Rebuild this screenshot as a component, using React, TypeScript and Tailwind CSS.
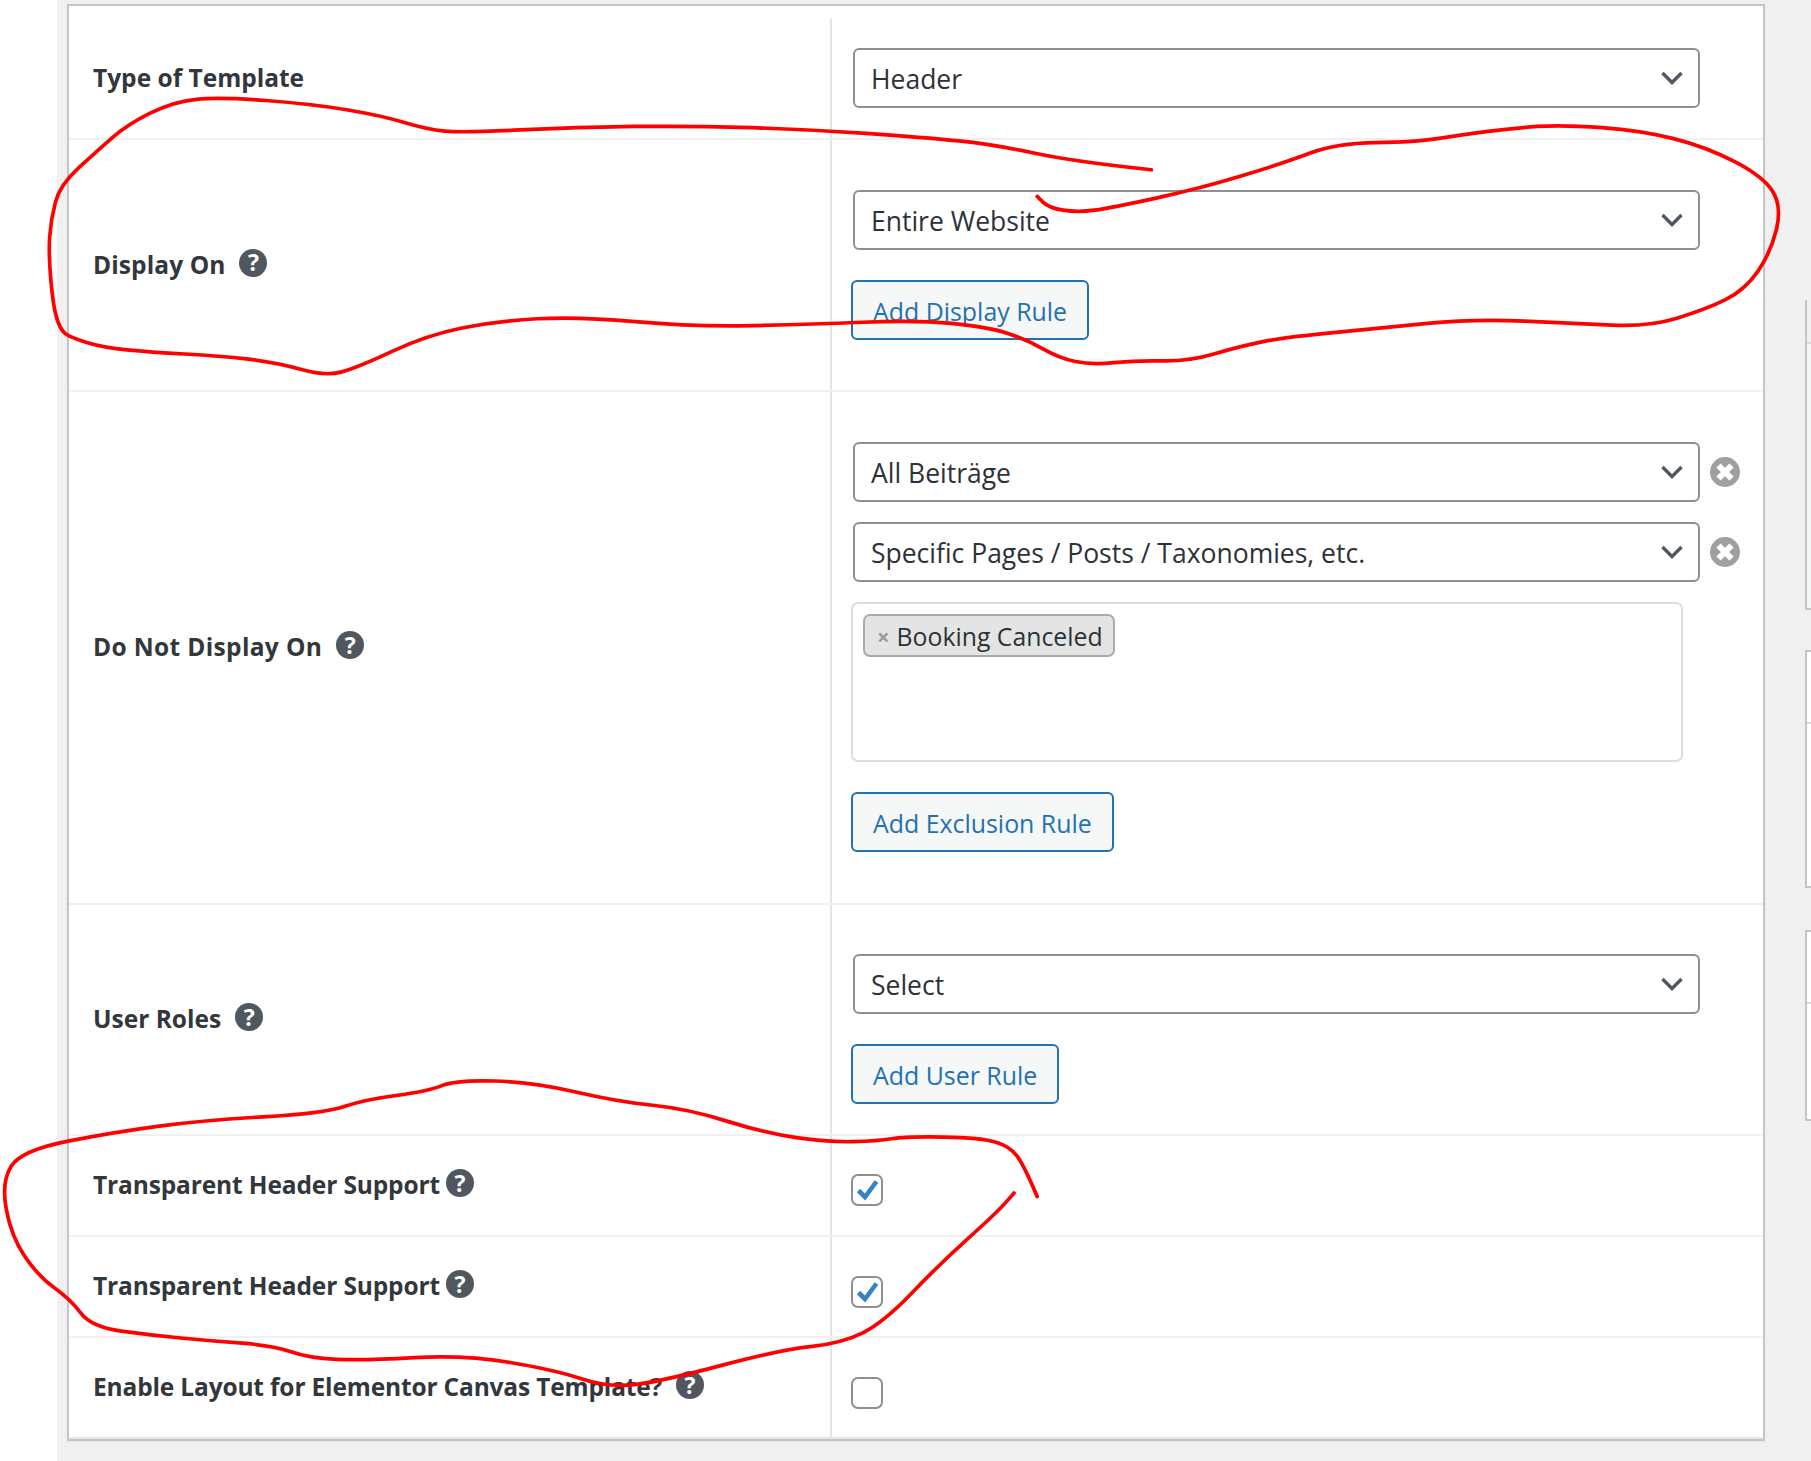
const font = "font-['Open_Sans',sans-serif]";

// freehand annotation, points are in the coordinates of the 1568 wide picture
const strokeOne: [number, number][] = [
  [997, 147], [930, 140], [860, 125], [800, 119], [700, 112], [600, 109], [500, 110], [400, 115], [370, 112],
  [330, 100], [270, 90], [190, 84], [150, 88], [110, 108], [85, 130], [52, 160], [44, 190], [42, 220], [46, 265],
  [52, 285], [60, 292], [90, 301], [130, 305], [190, 308], [240, 314], [282, 326], [310, 318], [370, 290],
  [430, 278], [500, 274], [600, 283], [700, 281], [793, 277], [855, 283], [889, 294], [917, 310], [945, 316],
  [984, 312], [1029, 313], [1073, 300], [1112, 292], [1197, 284], [1275, 276], [1365, 280], [1427, 283],
  [1477, 268], [1511, 251], [1533, 219], [1543, 179], [1527, 153], [1477, 127], [1421, 113], [1353, 108],
  [1309, 111], [1264, 117], [1225, 123], [1157, 124], [1112, 141], [1040, 163], [962, 180], [933, 184],
  [908, 180], [898, 170],
];
const strokeTwo: [number, number][] = [
  [898, 1036], [887, 1010], [875, 993], [850, 985], [784, 984], [760, 988], [717, 989], [662, 981], [595, 960],
  [535, 954], [462, 937], [395, 935], [370, 945], [316, 952], [280, 964], [176, 970], [100, 980], [18, 996],
  [1, 1024], [10, 1071], [33, 1105], [61, 1125], [79, 1149], [131, 1156], [182, 1161], [237, 1165], [267, 1176],
  [316, 1178], [401, 1173], [480, 1186], [528, 1202], [577, 1195], [674, 1169], [729, 1163], [765, 1145],
  [814, 1094], [863, 1050], [878, 1033],
];

function smoothPath(points: [number, number][]) {
  let d = `M${points[0][0]} ${points[0][1]}`;
  for (let i = 1; i < points.length - 1; i++) {
    const midX = (points[i][0] + points[i + 1][0]) / 2;
    const midY = (points[i][1] + points[i + 1][1]) / 2;
    d += ` Q${points[i][0]} ${points[i][1]} ${midX} ${midY}`;
  }
  const last = points[points.length - 1];
  return `${d} L${last[0]} ${last[1]}`;
}

function Help({ className = 'ml-[14px]' }: { className?: string }) {
  return (
    <span className={`-mt-[5px] flex h-[28px] w-[28px] shrink-0 items-center justify-center rounded-full bg-[#50575e] text-[23px] font-bold leading-none text-white ${className}`}>
      ?
    </span>
  );
}

function SelectBox({ value, onRemove }: { value: string; onRemove?: boolean }) {
  return (
    <div className="flex items-center">
      <div className="relative ml-[2px] w-[847px]">
        <select
          defaultValue={value}
          className="block h-[60px] w-full appearance-none rounded-[6px] border-2 border-[#8c8f94] bg-white pl-[16px] pt-[4px] text-[26.5px] text-[#2c3338] outline-none"
        >
          <option>{value}</option>
        </select>
        <svg className="absolute right-[15px] top-[17px]" width="26" height="26" viewBox="0 0 26 26" fill="none" stroke="#50575e" strokeWidth="3.4">
          <path d="M3.500 8l9.500 9.500L22.500 8" />
        </svg>
      </div>
      {onRemove && (
        <svg className="ml-[10px]" width="30" height="30" viewBox="0 0 30 30">
          <circle cx="15" cy="15" r="15" fill="#a0a0a0" />
          <path d="M8.500 8.500l13 13M21.500 8.500l-13 13" stroke="#fff" strokeWidth="6" />
        </svg>
      )}
    </div>
  );
}

function RuleButton({ children, className = '' }: { children: string; className?: string }) {
  return (
    <button className={`block h-[60px] rounded-[6px] border-2 border-[#2271b1] bg-[#f6f7f7] px-[20px] pt-[3px] text-[24.9px] text-[#2271b1] ${className}`}>
      {children}
    </button>
  );
}

function CheckBox({ checked }: { checked?: boolean }) {
  return (
    <span className="flex h-[32px] w-[32px] items-center justify-center rounded-[7px] border-2 border-[#8c8f94] bg-white">
      {checked && (
        <svg width="26" height="26" viewBox="0 0 26 26" fill="none" stroke="#3582c4" strokeWidth="4.600">
          <path d="M4.500 13.500l6.500 6.500L22.500 4.500" />
        </svg>
      )}
    </span>
  );
}

function Row({ label, labelClass = '', help, height, children, first, last, boxTop }: {
  label: string;
  labelClass?: string;
  help?: string;
  height: string;
  children: React.ReactNode;
  first?: boolean;
  last?: boolean;
  boxTop?: string;
}) {
  return (
    <div className={`flex ${height} border-b-2 ${last ? 'border-b-[#e6e6e8]' : 'border-b-[#f0f0f0]'}`}>
      <div className={`flex w-[761px] items-center pl-[24px] text-[24.500px] font-bold text-[#32373c] ${first ? 'pt-[12px]' : ''}`}>
        <span className={labelClass}>{label}</span>
        {help !== undefined && <Help className={help} />}
      </div>
      <div className={`flex-1 border-l-2 border-l-[#e4e4e4] pl-[19px] ${first ? 'mt-[12px]' : ''} ${boxTop ?? ''}`}>
        {children}
      </div>
    </div>
  );
}

export default function App() {
  return (
    <div className={`relative flex h-[1461px] overflow-hidden bg-white ${font}`}>
      <div className="w-[57px] shrink-0" />
      <div className="flex flex-1 bg-[#f0f0f1] pl-[10px] pt-[4px]">
        <div className="h-[1437px] w-[1698px] shrink-0 border-2 border-[#c3c4c7] bg-white shadow-[0_1px_1px_rgba(0,0,0,0.04)]">
          <Row label="Type of Template" height="h-[134px]" first boxTop="pt-[30px]">
            <SelectBox value="Header" />
          </Row>
          <Row label="Display On" labelClass="tracking-[0.1px]" help="ml-[14px]" height="h-[252px]" boxTop="pt-[50px]">
            <SelectBox value="Entire Website" />
            <RuleButton className="mt-[30px]">Add Display Rule</RuleButton>
          </Row>
          <Row label="Do Not Display On" labelClass="tracking-[0.35px]" help="ml-[14px]" height="h-[513px]" boxTop="pt-[50px]">
            <div className="flex flex-col gap-[20px]">
              <SelectBox value="All Beiträge" onRemove />
              <SelectBox value="Specific Pages / Posts / Taxonomies, etc." onRemove />
            </div>
            <div className="mt-[20px] h-[160px] w-[832px] rounded-[7px] border-2 border-[#dddddd] pl-[10px] pt-[10px]">
              <span className="inline-flex h-[43px] items-center rounded-[7px] border-2 border-[#aaaaaa] bg-[#e4e4e4] pl-[12px] pr-[10px] pt-[2px] text-[24.800px] text-[#2c3338]">
                <span className="mr-[7px] text-[22px] font-bold text-[#999999]">×</span>
                Booking Canceled
              </span>
            </div>
            <RuleButton className="mt-[30px]">Add Exclusion Rule</RuleButton>
          </Row>
          <Row label="User Roles" help="ml-[14px]" height="h-[231px]" boxTop="pt-[49px]">
            <SelectBox value="Select" />
            <RuleButton className="mt-[30px]">Add User Rule</RuleButton>
          </Row>
          <Row label="Transparent Header Support" labelClass="tracking-[-0.13px]" help="ml-[6px]" height="h-[101px]" boxTop="pt-[38px]">
            <CheckBox checked />
          </Row>
          <Row label="Transparent Header Support" labelClass="tracking-[-0.13px]" help="ml-[6px]" height="h-[101px]" boxTop="pt-[39px]">
            <CheckBox checked />
          </Row>
          <Row label="Enable Layout for Elementor Canvas Template?" labelClass="tracking-[-0.16px]" help="ml-[14px]" height="h-[101px]" boxTop="pt-[39px]" last>
            <CheckBox />
          </Row>
        </div>
        <div className="ml-[40px] flex-1 pt-[296px]">
          <div className="h-[310px] border-b-2 border-l-2 border-[#c3c4c7] bg-[#f6f7f7]">
            <div className="h-[44px] border-b-2 border-[#dcdcde] bg-[#f0f0f1]" />
          </div>
          <div className="mt-[40px] h-[238px] border-y-2 border-l-2 border-[#c3c4c7] bg-white">
            <div className="h-[72px] border-b-2 border-[#dcdcde]" />
          </div>
          <div className="mt-[42px] h-[191px] border-y-2 border-l-2 border-[#c3c4c7] bg-white">
            <div className="h-[72px] border-b-2 border-[#dcdcde]" />
          </div>
        </div>
      </div>
      <svg className="pointer-events-none absolute left-0 top-0" width="1811" height="1461" viewBox="0 0 1568 1265" fill="none" stroke="#ff0000" strokeWidth="3.2" strokeLinecap="round" strokeLinejoin="round">
        <path d={smoothPath(strokeOne)} />
        <path d={smoothPath(strokeTwo)} />
      </svg>
    </div>
  );
}
